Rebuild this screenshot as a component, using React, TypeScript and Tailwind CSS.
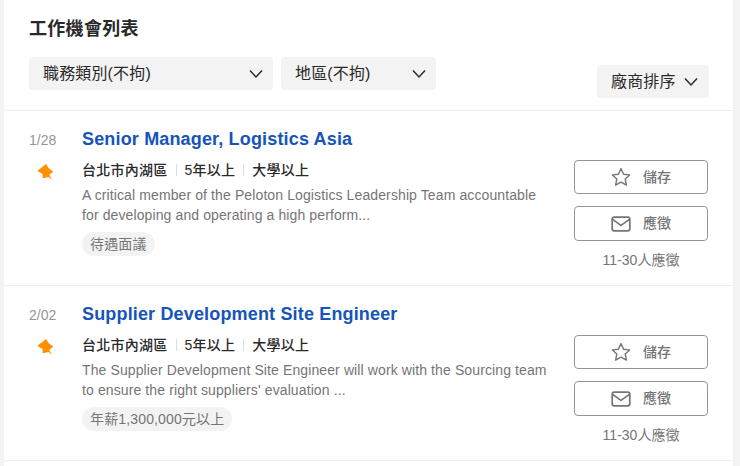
const F = '[font-family:"Liberation_Sans","Noto_Sans_CJK_TC",sans-serif]';

function Chevron() {
  return (
    <svg width="16" height="10" viewBox="0 0 16 10" fill="none" stroke="#292929" strokeWidth="1.5" className="shrink-0">
      <path d="M2 1.5 L8 8 L14 1.5" />
    </svg>
  );
}

function Pin() {
  return (
    <svg width="18" height="19" viewBox="0 0 18 19" className="shrink-0">
      <path d="M1.3 8.7 L5.7 5.5 L10 2 L12.5 6 L17.3 9.7 L13.5 12.5 L14 14.5 L16.3 18 L12.5 15 L6.7 16.3 L6.5 12 Z" fill="#ff9100" />
    </svg>
  );
}

function Star() {
  return (
    <svg width="20" height="20" viewBox="0 0 20 20" fill="none" stroke="#757575" strokeWidth="1.4" strokeLinejoin="round">
      <path d="M10 1.6 L12.6 7.2 L18.6 7.9 L14.2 12 L15.4 18.1 L10 15.1 L4.6 18.1 L5.8 12 L1.4 7.9 L7.4 7.2 Z" />
    </svg>
  );
}

function Mail() {
  return (
    <svg width="20" height="16" viewBox="0 0 20 16" fill="none" stroke="#757575" strokeWidth="1.7" strokeLinejoin="round">
      <rect x="1.2" y="1.2" width="17.6" height="13.6" rx="2" />
      <path d="M1.6 3.4 L10 9.4 L18.4 3.4" />
    </svg>
  );
}

function Job(p: { date: string; title: string; d1: string; d2: string; tag: string }) {
  return (
    <div className="flex h-[175px] border-b border-[#eeeeee] pl-[25px] pr-[25px]">
      <div className="w-[53px] shrink-0">
        <div className="mt-[19px] h-[20px] text-[14px] leading-[20px] text-[#959595]">{p.date}</div>
        <div className="ml-[7px] mt-[12px]"><Pin /></div>
      </div>
      <div className="w-[492px] shrink-0">
        <div className="mt-[15px] h-[26px] text-[18px] font-bold leading-[26px] tracking-[0.16px] text-[#1654b9]">{p.title}</div>
        <div className="mt-[7px] flex h-[22px] items-center text-[14px] font-medium leading-[22px] tracking-[0.25px] text-[#292929]">
          <span>台北市內湖區</span>
          <span className="mx-[8px] h-[12px] w-px bg-[#dddddd]" />
          <span>5年以上</span>
          <span className="mx-[8px] h-[12px] w-px bg-[#dddddd]" />
          <span>大學以上</span>
        </div>
        <div className="mt-[4px] text-[14px] leading-[20px] tracking-[0.11px] text-[#757575]">
          <div>{p.d1}</div>
          <div>{p.d2}</div>
        </div>
        <div className="mt-[7px] flex">
          <span className="flex h-[24px] items-center rounded-full bg-[#f3f3f3] px-[8px] text-[14px] leading-[24px] tracking-[0.15px] text-[#757575]">{p.tag}</span>
        </div>
      </div>
      <div className="w-[134px] shrink-0 pt-[49px]">
        <button className="flex h-[34px] w-[134px] items-center rounded-[4px] border border-[#959595] pl-[36px] text-[14px] font-medium text-[#757575]">
          <Star /><span className="ml-[12px]">儲存</span>
        </button>
        <button className="mt-[12px] flex h-[35px] w-[134px] items-center rounded-[4px] border border-[#959595] pl-[36px] text-[14px] font-medium text-[#757575]">
          <Mail /><span className="ml-[12px]">應徵</span>
        </button>
        <div className="mt-[9px] text-center text-[14px] leading-[20px] text-[#757575]">11-30人應徵</div>
      </div>
    </div>
  );
}

export default function App() {
  return (
    <div className={`h-[466px] w-[740px] overflow-hidden bg-[#f3f3f3] ${F}`}>
      <div className="ml-[4px] h-[466px] w-[729px] bg-white">
        <div className="h-[111px] border-b border-[#eeeeee] pl-[25px] pr-[24px]">
          <div className="flex h-[57px] items-center text-[18px] font-bold leading-[26px] tracking-[0.3px] text-[#292929]">工作機會列表</div>
          <div className="flex items-start">
            <div className="flex h-[33px] w-[244px] items-center justify-between rounded-[4px] bg-[#f3f3f3] pl-[14px] pr-[9px] text-[16px] tracking-[0.15px] text-[#292929]">
              <span>職務類別(不拘)</span><Chevron />
            </div>
            <div className="ml-[8px] flex h-[33px] w-[155px] items-center justify-between rounded-[4px] bg-[#f3f3f3] pl-[14px] pr-[9px] text-[16px] tracking-[0.15px] text-[#292929]">
              <span>地區(不拘)</span><Chevron />
            </div>
            <div className="ml-auto mt-[8px] flex h-[33px] w-[112px] items-center justify-between rounded-[4px] bg-[#f3f3f3] pl-[14px] pr-[10px] text-[16px] tracking-[0.15px] text-[#292929]">
              <span>廠商排序</span><Chevron />
            </div>
          </div>
        </div>
        <Job
          date="1/28"
          title="Senior Manager, Logistics Asia"
          d1="A critical member of the Peloton Logistics Leadership Team accountable"
          d2="for developing and operating a high perform..."
          tag="待遇面議"
        />
        <Job
          date="2/02"
          title="Supplier Development Site Engineer"
          d1="The Supplier Development Site Engineer will work with the Sourcing team"
          d2="to ensure the right suppliers' evaluation ..."
          tag="年薪1,300,000元以上"
        />
      </div>
    </div>
  );
}
